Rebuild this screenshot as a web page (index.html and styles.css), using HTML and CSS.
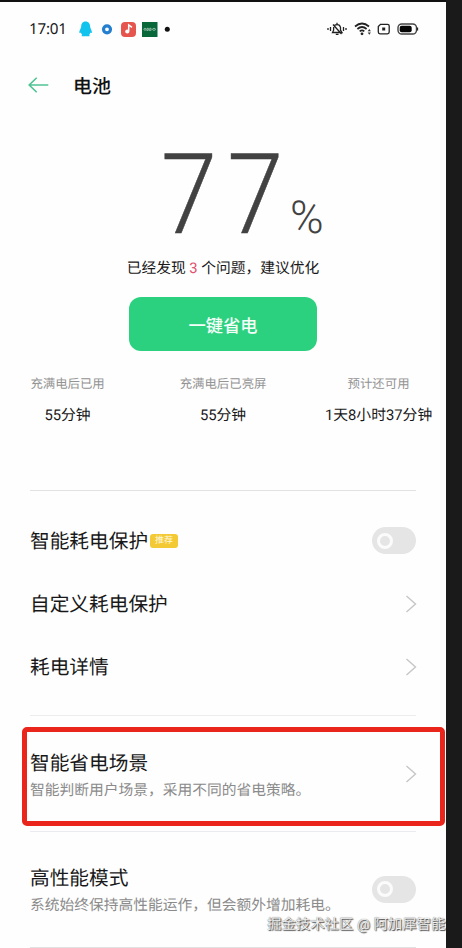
FILE: index.html
```html
<!DOCTYPE html>
<html lang="zh-CN">
<head>
<meta charset="utf-8">
<title>电池</title>
<link rel="stylesheet" href="styles.css">
</head>
<body>
<main class="screen">
  <div class="status">
    <span class="time">17:01</span>
    <svg class="notices" width="94" height="18" viewBox="0 0 94 18">
      <path d="M7.500 1.500C4.600 1.500 3.200 3.800 3.200 6.500 3 8.400 1.300 10.400 1.300 12.200c0 1 .7 1 1.600.2.2 1 .7 1.800 1.300 2.500-.8.500-.9 1.300.2 1.300h6.500c1.100 0 1-.8.2-1.300.600-.7 1.100-1.500 1.300-2.500.9.800 1.500.800 1.500-.2 0-1.800-1.600-3.800-1.800-5.700 0-2.700-1.600-5-4.600-5z" fill="#12c3ee"/>
      <circle cx="29" cy="9.300" r="3.500" fill="#fff" stroke="#247fcf" stroke-width="3.200"/>
      <rect x="43" y="2" width="15" height="15" rx="4" fill="#e5554e"/>
      <path d="M50.700 11V5l3.300 2.300" fill="none" stroke="#fff" stroke-width="1.500"/>
      <circle cx="49.300" cy="11.500" r="2.100" fill="#fff"/>
      <rect x="64" y="2" width="15.500" height="15" fill="#08683a"/>
      <g fill="none" stroke="#b7d5c5" stroke-width=".7"><ellipse cx="67" cy="9.300" rx="1.100" ry="1"/><path d="M69 11V8.300h1.400v2H69M71.700 11V8.300h1.400v2h-1.400"/><ellipse cx="76" cy="9.300" rx="1.500" ry="1"/></g>
      <circle cx="89.300" cy="9.300" r="2.500" fill="#111"/>
    </svg>
    <svg class="system" width="92" height="16" viewBox="0 0 92 16">
      <g fill="none" stroke="#222" stroke-width="1.300">
        <path d="M1 7v2M3.500 6v4M16.500 6v4M19 7v2M5.500 11.500h9.500l-1.500-2.300V6.500a3.500 3.500 0 0 0-6.900 0v2.700zM8.800 13.300h2.700M10 3V1.700M6 3.500l8.500 9.500"/>
        <path d="M28 5.500q7-6 14 0M30.400 8q4.600-4 9.200 0M32.700 10.400q2.300-2 4.600 0" stroke-width="1.700"/>
        <path d="M51.300 5.500l2.200-2.200h7q1.700 0 1.700 1.700v6q0 1.800-1.700 1.800H53q-1.700 0-1.700-1.800z" stroke-width="1.300"/>
        <rect x="71" y="3" width="18.500" height="10" rx="3.800" stroke="#444" stroke-width="1.400"/>
        <path d="M90.500 6.500v3"/>
      </g>
      <circle cx="35" cy="12.800" r="1.400" fill="#222"/>
      <path d="M42.300 8l1.600 2.200h-3.200zM42.300 13.800l-1.600-2.200h3.200z" fill="#333"/>
      <path d="M55.200 6.500h3v3h-3z" fill="#222"/>
      <rect x="72.700" y="4.700" width="12" height="6.600" rx="2" fill="#050505"/>
    </svg>
  </div>
  <header class="header">
    <svg width="22" height="18" viewBox="0 0 22 18" fill="none" stroke="#4fc394" stroke-width="1.600"><path d="M20.300 9H1.500M8.700 1.700L1.200 9l7.500 7.300"/></svg>
    <h1>电池</h1>
  </header>
  <section class="summary">
    <div class="level"><span class="number">77</span><span class="percent">%</span></div>
    <p class="issues">已经发现 <em>3</em> 个问题，建议优化</p>
    <button class="save">一键省电</button>
  </section>
  <section class="stats">
    <div class="stat"><span>充满电后已用</span><strong>55分钟</strong></div>
    <div class="stat"><span>充满电后已亮屏</span><strong>55分钟</strong></div>
    <div class="stat"><span>预计还可用</span><strong>1天8小时37分钟</strong></div>
  </section>
  <section class="group links">
    <div class="row"><h2>智能耗电保护</h2><span class="tag">推荐</span><i class="switch"></i></div>
    <div class="row"><h2>自定义耗电保护</h2><svg class="chevron" viewBox="0 0 12 18"><path d="M1.500 1l9 8-9 8"/></svg></div>
    <div class="row"><h2>耗电详情</h2><svg class="chevron" viewBox="0 0 12 18"><path d="M1.500 1l9 8-9 8"/></svg></div>
  </section>
  <section class="group scene">
    <div class="row"><div><h2>智能省电场景</h2><p>智能判断用户场景，采用不同的省电策略。</p></div><svg class="chevron" viewBox="0 0 12 18"><path d="M1.500 1l9 8-9 8"/></svg></div>
    <div class="marker"></div>
  </section>
  <section class="group performance">
    <div class="row"><div><h2>高性能模式</h2><p>系统始终保持高性能运作，但会额外增加耗电。</p></div><i class="switch"></i></div>
  </section>
  <div class="end-line"></div>
  <div class="watermark">掘金技术社区 @ 阿加犀智能</div>
</main>
</body>
</html>
```
FILE: styles.css
```css
*, *::before { box-sizing: border-box; }
body {
  margin: 0;
  background: #1a1a1a;
  font-family: Roboto, "Noto Sans CJK SC", sans-serif;
  color: #181818;
  text-rendering: geometricPrecision;
}
h1, h2, p { margin: 0; font-weight: 400; white-space: nowrap; }
.screen {
  position: relative;
  width: 446px;
  height: 948px;
  border-top: 2px solid #111;
  background: #fefefe;
  overflow: hidden;
}
.status {
  display: flex;
  align-items: center;
  height: 54px;
  padding: 0 27px 0 29px;
}
.time { width: 49px; font: 15.200px/20px "Noto Sans", sans-serif; letter-spacing: -.2px; }
.system { margin-left: auto; }
.header {
  display: flex;
  align-items: center;
  gap: 23px;
  height: 58px;
  padding-left: 28px;
}
h1 { padding-top: 3px; font-size: 19px; line-height: 28px; font-weight: 500; color: #111; }
.summary { display: flex; flex-direction: column; align-items: center; }
.level {
  display: flex;
  align-items: baseline;
  width: 100%;
  height: 143px;
  padding-left: 161px;
  color: #424242;
  line-height: 164px;
  font-weight: 300;
}
.number {
  width: 130px;
  font-size: 112px;
  letter-spacing: 11.500px;
  transform: scaleX(.9);
  transform-origin: left;
  -webkit-text-stroke: .5px #424242;
}
.percent { font-size: 45.500px; transform: translateX(-1px); }
.issues { font-size: 14.750px; line-height: 22px; }
.issues em { font-style: normal; color: #e0526f; }
.save {
  width: 188px;
  height: 54px;
  margin-top: 18px;
  padding: 1px 0 0;
  border: 0;
  border-radius: 12px;
  background: #2cd180;
  color: #f5fff9;
  font: 500 17.300px/53px "Noto Sans CJK SC", sans-serif;
}
.stats {
  display: grid;
  grid-template-columns: repeat(3, 155.500px);
  height: 139px;
  margin-left: -10.200px;
  padding-top: 23px;
  width: 467px;
}
.stat { display: flex; flex-direction: column; align-items: center; gap: 10px; }
.stat span { font-size: 12.400px; line-height: 21px; color: #939393; }
.stat strong { font-size: 14.800px; line-height: 20px; font-weight: 400; white-space: nowrap; }
.group { margin: 0 30px; border-top: 1px solid #e2e2e2; }
.row { display: flex; align-items: center; height: 63px; }
h2 { font-size: 19.700px; line-height: 28px; }
.row p { font-size: 14.750px; line-height: 22px; color: #8b8b8b; padding-top: 1px; }
.links { height: 225px; padding-top: 18px; }
.links h2 { padding-top: 3px; }
.scene { position: relative; height: 116px; padding-top: 28px; border-color: #ededed; }
.scene .chevron { margin-bottom: 4px; }
.performance { height: 116px; padding-top: 27px; border-color: #ebebef; }
.performance .switch { margin-bottom: 3px; }
.end-line { height: 1px; margin: 0 30px; background: #e2e2e2; }
.tag {
  width: 28px;
  height: 14px;
  margin-left: 2px;
  border-radius: 3px;
  background: #f3ca35;
  color: #fff8dd;
  font-size: 9px;
  line-height: 15px;
  text-align: center;
}
.chevron {
  width: 12px;
  height: 18px;
  margin-left: auto;
  margin-right: -1px;
  fill: none;
  stroke: #c6c6c6;
  stroke-width: 1.400;
}
.switch {
  width: 44px;
  height: 27px;
  margin-left: auto;
  padding: 5.500px 5px;
  border-radius: 14px;
  background: #e5e5e5;
}
.switch::before {
  content: "";
  display: block;
  width: 16px;
  height: 16px;
  border: 3px solid #fbfbfb;
  border-radius: 50%;
}
.marker {
  position: absolute;
  left: -8px;
  top: 11px;
  width: 423px;
  height: 99px;
  border: 5px solid #ea251c;
  border-radius: 5px;
}
.watermark {
  position: absolute;
  left: 267px;
  bottom: 12px;
  font-size: 14.400px;
  line-height: 22px;
  color: #f0f0f0;
  white-space: nowrap;
  text-shadow: 1px 1px 1px #444, 0 0 1px #666;
}
```
